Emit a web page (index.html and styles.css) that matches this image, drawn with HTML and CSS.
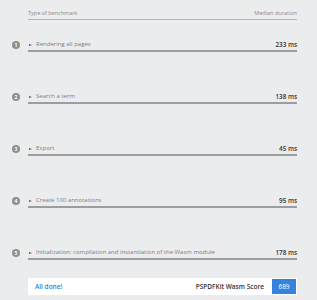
FILE: index.html
```html
<!DOCTYPE html>
<html lang="en">

<head>
  <meta charset="UTF-8" />
  <meta name="viewport" content="width=device-width, initial-scale=1.0" />
  <title>PSPDFKit Wasm Benchmark</title>
  <link rel="stylesheet" href="styles.css">
</head>

<body>
  <div class="bench">
    <div class="bench-head">
      <span>Type of benchmark</span>
      <span>Median duration</span>
    </div>

    <div class="bench-row">
      <span class="num">1</span>
      <div class="bench-line">
        <span class="name"><i class="tri"></i>Rendering all pages</span>
        <span class="time">233 ms</span>
      </div>
    </div>

    <div class="bench-row">
      <span class="num">2</span>
      <div class="bench-line">
        <span class="name"><i class="tri"></i>Search a term</span>
        <span class="time">138 ms</span>
      </div>
    </div>

    <div class="bench-row">
      <span class="num">3</span>
      <div class="bench-line">
        <span class="name"><i class="tri"></i>Export</span>
        <span class="time">45 ms</span>
      </div>
    </div>

    <div class="bench-row">
      <span class="num">4</span>
      <div class="bench-line">
        <span class="name"><i class="tri"></i>Create 100 annotations</span>
        <span class="time">95 ms</span>
      </div>
    </div>

    <div class="bench-row">
      <span class="num">5</span>
      <div class="bench-line">
        <span class="name"><i class="tri"></i>Initialization: compilation and instantiation of the Wasm module</span>
        <span class="time">178 ms</span>
      </div>
    </div>

    <div class="bench-foot">
      <span class="done">All done!</span>
      <div class="score">
        <span>PSPDFKit Wasm Score</span>
        <span class="score-value">689</span>
      </div>
    </div>
  </div>
</body>

</html>
```

FILE: styles.css
```css
* {
  margin: 0;
  padding: 0;
  box-sizing: border-box;
  font-family: 'Open Sans', 'Noto Sans', sans-serif;
}

body {
  background: #ebeced;
  width: 317px;
  height: 300px;
  overflow: hidden;
}

.bench {
  width: 297px;
}

.bench-head {
  margin-left: 28px;
  height: 20px;
  display: flex;
  justify-content: space-between;
  align-items: flex-end;
  padding-bottom: 2px;
  border-bottom: 1px solid #b5b6b8;
  font-size: 5.5px;
  color: #8a8b8d;
}

.bench-row {
  display: flex;
  align-items: flex-start;
  margin-top: 20px;
}

.bench-row + .bench-row {
  margin-top: 40px;
}

.num {
  width: 8px;
  height: 8px;
  margin: 1px 8px 0 12px;
  border-radius: 50%;
  background: #8e8f91;
  color: #fff;
  font-size: 5px;
  font-weight: 700;
  line-height: 1;
  display: flex;
  align-items: center;
  justify-content: center;
}

.bench-line {
  flex: 1;
  height: 12px;
  display: flex;
  justify-content: space-between;
  align-items: center;
  padding-bottom: 1px;
  border-bottom: 2px solid #9c9da0;
  font-size: 6px;
  line-height: 9px;
}

.name {
  color: #7b7c7f;
  display: flex;
  align-items: center;
}

.tri {
  width: 0;
  height: 0;
  border-left: 3px solid #55565a;
  border-top: 1.5px solid transparent;
  border-bottom: 1.5px solid transparent;
  margin: 0 4px 0 1px;
}

.time {
  color: #333;
  font-size: 6.3px;
  font-weight: 600;
}

.bench-foot {
  margin: 18px 0 0 28px;
  height: 17px;
  background: #fff;
  display: flex;
  justify-content: space-between;
  align-items: center;
  padding-left: 7px;
}

.done {
  color: #2f7fde;
  font-size: 6.5px;
  font-weight: 600;
}

.score {
  display: flex;
  align-items: center;
  gap: 8px;
  font-size: 6.5px;
  font-weight: 600;
  color: #333;
}

.score-value {
  width: 24px;
  height: 15px;
  margin-right: 1px;
  background: #3683dd;
  color: #fff;
  font-weight: 400;
  display: flex;
  align-items: center;
  justify-content: center;
}
```
